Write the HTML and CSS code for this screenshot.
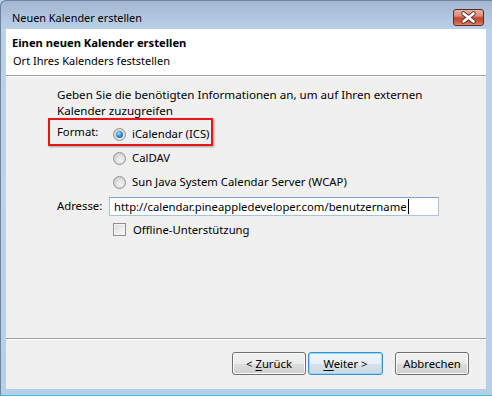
FILE: index.html
```html
<!DOCTYPE html>
<html>
<head>
<meta charset="utf-8">
<link rel="stylesheet" href="styles.css">
</head>
<body>
<div class="window">
  <div class="titlebar">
    <span class="title">Neuen Kalender erstellen</span>
    <div class="close">
      <svg width="31" height="17" viewBox="0 0 31 17">
        <path d="M10.5 4.5 L20.5 12.5 M20.5 4.5 L10.5 12.5" stroke="#5a3a36" stroke-width="4.6" stroke-linecap="round" fill="none"/>
        <path d="M10.5 4.5 L20.5 12.5 M20.5 4.5 L10.5 12.5" stroke="#ffffff" stroke-width="2.6" stroke-linecap="round" fill="none"/>
      </svg>
    </div>
  </div>
  <div class="client">
    <div class="header">
      <div class="h-title">Einen neuen Kalender erstellen</div>
      <div class="h-sub">Ort Ihres Kalenders feststellen</div>
    </div>
    <div class="content">
      <p class="desc">Geben Sie die benötigten Informationen an, um auf Ihren externen<br>Kalender zuzugreifen</p>
      <div class="form">
        <div class="label fmt">Format:</div>
        <div class="radios">
          <div class="opt"><span class="radio checked"></span><span>iCalendar (ICS)</span></div>
          <div class="opt"><span class="radio"></span><span>CalDAV</span></div>
          <div class="opt"><span class="radio"></span><span>Sun Java System Calendar Server (WCAP)</span></div>
        </div>
        <div class="label addr">Adresse:</div>
        <div class="input"><span>http://calendar.pineappledeveloper.com/benutzername</span><span class="caret"></span></div>
        <div></div>
        <div class="opt chk"><span class="checkbox"></span><span>Offline-Unterstützung</span></div>
      </div>
      <div class="highlight"></div>
    </div>
    <div class="buttons">
      <div class="btn"><span>&lt; <u>Z</u>urück</span></div>
      <div class="btn default"><span><u>W</u>eiter &gt;</span></div>
      <div class="btn cancel"><span>Abbrechen</span></div>
    </div>
  </div>
</div>
</body>
</html>
```
FILE: styles.css
```css
html, body {
  margin: 0;
  padding: 0;
}
body {
  font-family: "Noto Sans", "Open Sans", sans-serif;
  font-size: 11.3px;
  line-height: 15px;
  color: #000;
  background: #b9d1ea;
}
.window {
  width: 492px;
  height: 396px;
  box-sizing: border-box;
  border-top: 1px solid #6f839d;
  border-left: 1px solid #6f839d;
  border-top-left-radius: 6px;
  border-bottom: 1px solid #35c1d6;
  padding: 0 6px 6px 5px;
  display: flex;
  flex-direction: column;
  background: linear-gradient(#a3b6cf 0px, #b2c7e0 18px, #bad1ea 30px, #bbd2eb 200px, #b6cfe9 396px);
}
.titlebar {
  height: 28px;
  display: flex;
  justify-content: space-between;
  align-items: flex-start;
  padding-left: 6px;
  padding-right: 2px;
  box-sizing: border-box;
}
.title {
  margin-top: 9px;
  font-size: 10.9px;
  color: #000;
}
.close {
  margin-top: 8px;
  width: 29px;
  height: 15px;
  border: 1px solid #5b2a24;
  border-radius: 3px;
  background: linear-gradient(#e9b2a6 0%, #dc8a77 40%, #c5472f 52%, #cd5a3f 80%, #dd8a6c 100%);
  position: relative;
  overflow: hidden;
}
.close svg {
  position: absolute;
  left: -1px;
  top: -1px;
}
.client {
  height: 360px;
  display: flex;
  flex-direction: column;
  background: #f0f0f0;
}
.header {
  box-sizing: border-box;
  background: #fff;
  border-bottom: 1px solid #a0a0a0;
  height: 47px;
  padding: 6px 0 0 6px;
}
.h-title {
  font-weight: bold;
  font-size: 11.2px;
}
.h-sub {
  margin-top: 3px;
  padding-left: 1px;
  font-size: 11px;
}
.content {
  position: relative;
  height: 263px;
  box-sizing: border-box;
  border-top: 1px solid #fff;
  border-bottom: 1px solid #a0a0a0;
  padding: 10px 0 0 51px;
}
.desc {
  margin: 0;
  font-size: 11.6px;
  line-height: 16px;
}
.form {
  margin-top: 2px;
  display: grid;
  grid-template-columns: 52px 1fr;
}
.label {
  align-self: start;
}
.fmt {
  margin-top: 3px;
}
.addr {
  margin-top: 5px;
}
.radios {
  display: flex;
  flex-direction: column;
}
.opt {
  height: 24px;
  display: flex;
  align-items: center;
  padding-left: 4px;
}
.radio {
  width: 13px;
  height: 13px;
  box-sizing: border-box;
  border-radius: 50%;
  border: 1px solid #8e8f8f;
  background: radial-gradient(circle at 60% 65%, #f4f4f4 0%, #d8d8d8 60%, #c9c9c9 100%);
  margin-right: 6px;
  margin-top: 3px;
  position: relative;
}
.radio.checked::after {
  content: "";
  position: absolute;
  left: 2px;
  top: 2px;
  width: 7px;
  height: 7px;
  border-radius: 50%;
  background: radial-gradient(circle at 40% 35%, #b5e0fb 0%, #3d95d8 40%, #0d4f8a 100%);
}
.input {
  margin-top: 4px;
  width: 330px;
  height: 19px;
  box-sizing: border-box;
  border: 1px solid #a9c2dd;
  border-top-color: #7ea3c9;
  background: #fff;
  padding: 1px 0 0 4px;
  line-height: 15px;
  white-space: nowrap;
  overflow: hidden;
  display: flex;
  align-items: flex-start;
}
.caret {
  display: inline-block;
  width: 1px;
  height: 15px;
  background: #000;
  margin-left: 1px;
}
.chk {
  margin-top: 1px;
}
.checkbox {
  width: 13px;
  height: 13px;
  box-sizing: border-box;
  border: 1px solid #8e8f8f;
  background: linear-gradient(135deg, #d9d9d9 0%, #eeeeee 60%, #fbfbfb 100%);
  box-shadow: inset 0 0 0 1px #f4f4f4;
  margin-right: 7px;
}
.highlight {
  position: absolute;
  left: 42px;
  top: 41px;
  width: 165px;
  height: 28px;
  box-sizing: border-box;
  border: 2px solid #e8151b;
  box-shadow: 1px 1px 2px rgba(0,0,0,0.35);
}
.buttons {
  flex: 1;
  border-top: 1px solid #fff;
  display: flex;
  justify-content: flex-end;
  align-items: flex-start;
  padding: 12px 17px 0 0;
}
.btn {
  width: 74px;
  height: 23px;
  box-sizing: border-box;
  border: 1px solid #707070;
  border-radius: 3px;
  background: linear-gradient(#f2f2f2 0%, #ebebeb 50%, #dddddd 51%, #cfcfcf 100%);
  box-shadow: inset 0 0 0 1px #fbfbfb;
  display: flex;
  align-items: center;
  justify-content: center;
  margin-left: 2px;
  white-space: pre;
}
.btn.default {
  width: 75px;
  border-color: #3c8fd0;
  box-shadow: inset 0 0 0 1px #8fdcf8;
  background: linear-gradient(#f0f5f9 0%, #e8eef4 50%, #d9e2ea 51%, #ccd7e2 100%);
}
.btn.cancel {
  margin-left: 12px;
}
u {
  text-decoration: underline;
  text-underline-offset: 2px;
}
```
